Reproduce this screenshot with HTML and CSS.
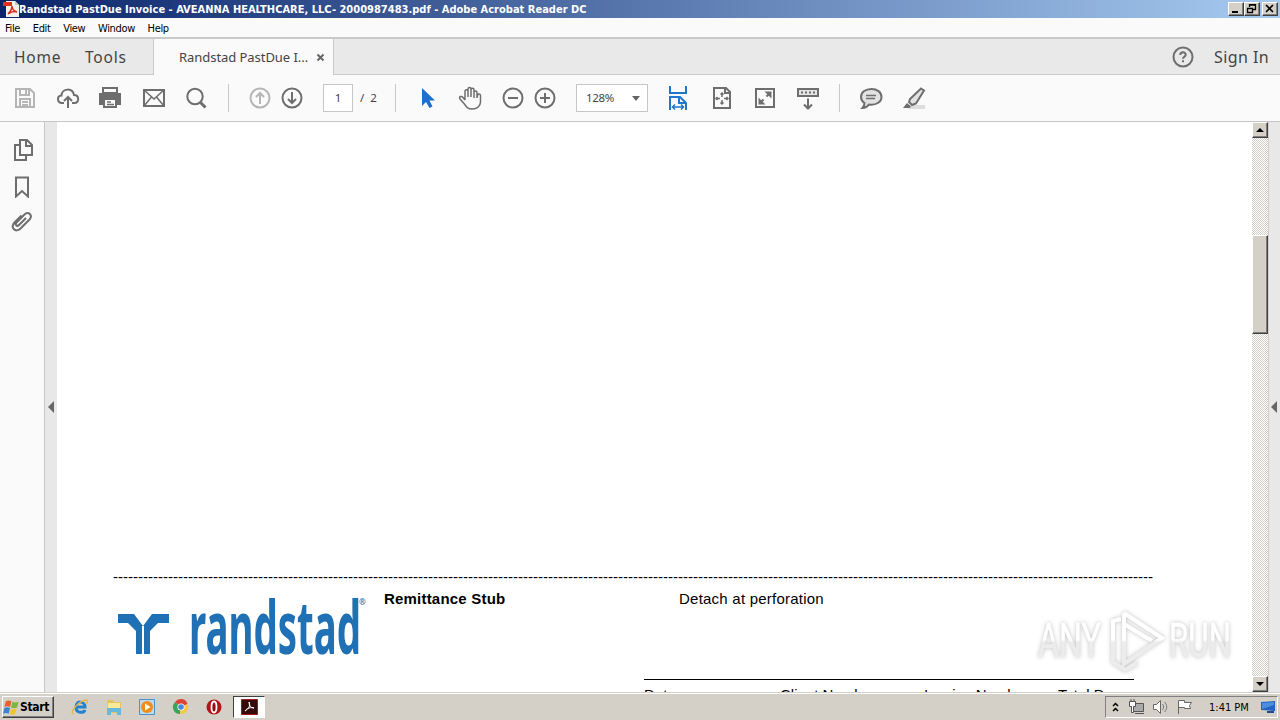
FILE: index.html
```html
<!DOCTYPE html>
<html lang="en">
<head>
  <meta charset="UTF-8">
  <title>Randstad PastDue Invoice - Adobe Acrobat Reader DC</title>
  <link rel="stylesheet" href="styles.css">
</head>
<body>
  <header class="titlebar">
    <svg class="app-icon" width="17" height="16" viewBox="0 0 17 16">
      <path d="M4 0h9l4 4v12H4z" fill="#f4f0ee"/>
      <path d="M13 0v4h4z" fill="#c8c8c8"/>
      <path d="M1 1h9v4H1z" fill="#e03020"/>
      <path d="M6 13c3-3 4-5 4-8 0 4 2 5 5 6-3-1-6 0-9 2z" fill="none" stroke="#d42a1c" stroke-width="1.5"/>
    </svg>
    <span class="window-title">Randstad PastDue Invoice - AVEANNA HEALTHCARE, LLC- 2000987483.pdf - Adobe Acrobat Reader DC</span>
    <div class="window-buttons">
      <button class="win-btn"><svg width="12" height="10"><path d="M3 8h6" stroke="#000" stroke-width="2"/></svg></button>
      <button class="win-btn"><svg width="12" height="10"><path d="M4.500 3V.5h6v5H8M4 1h7M2.500 4.500h5v4h-5zM2 4.500h6" fill="none" stroke="#000" stroke-width="1.300"/></svg></button>
      <button class="win-btn close"><svg width="12" height="10"><path d="M3 1l7 7M10 1L3 8" stroke="#000" stroke-width="1.600"/></svg></button>
    </div>
  </header>

  <nav class="menubar">
    <span>File</span><span>Edit</span><span>View</span><span>Window</span><span>Help</span>
  </nav>

  <div class="tabs">
    <div class="tab-links"><span class="home">Home</span><span>Tools</span></div>
    <div class="doc-tab">
      <span>Randstad PastDue I...</span>
      <svg width="9" height="9"><path d="M1.500 1.500l6 6M7.500 1.500l-6 6" stroke="#666" stroke-width="2"/></svg>
    </div>
    <div class="tab-right">
      <svg width="22" height="22" viewBox="0 0 22 22" fill="none" stroke="#6e6e6e" stroke-width="2">
        <circle cx="11" cy="11" r="9.500"/>
        <path d="M8.300 9c0-3.600 5.400-3.400 5.400-.3 0 2-2.700 2-2.700 4M11 14.300v2"/>
      </svg>
      <span class="sign-in">Sign In</span>
    </div>
  </div>

  <div class="toolbar">
    <!-- save -->
    <svg class="icon light" viewBox="0 0 24 24"><path d="M3 3h14l4 4v14H3zM7 3v6h9V3M13 4v4M7 21v-8h10v8M9 16h6M9 19h6"/></svg>
    <!-- cloud upload -->
    <svg class="icon" viewBox="0 0 24 24"><path d="M8 17H6c-5 0-5.500-7-.5-7.500C6 2 16.500 1.500 18 9c5.500 0 5.500 8 .5 8H16M12 22V11M8 15l4-4 4 4"/></svg>
    <!-- print -->
    <svg class="icon" viewBox="0 0 24 24"><path d="M5 2h14v5H5z"/><path class="solid" d="M1 7h22v12h-4v-5H5v5H1z"/><path d="M6 13h12v8H6z" fill="#fafafa"/><path class="thin" d="M9 16h4M9 18.500h7"/></svg>
    <!-- mail -->
    <svg class="icon" viewBox="0 0 24 24"><path d="M2 4h20v16H2z"/><path class="thin" d="M2 4l10 9 10-9M2 20l7.500-9M22 20l-7.500-9"/></svg>
    <!-- search -->
    <svg class="icon" viewBox="0 0 24 24"><circle cx="11" cy="10.500" r="7.700"/><path class="heavy" d="M16.500 16.500l5 5"/></svg>
    <i class="sep"></i>
    <!-- previous / next page -->
    <svg class="icon light" viewBox="0 0 24 24"><circle cx="12" cy="12" r="9.500"/><path d="M12 18V7M8 11l4-4 4 4"/></svg>
    <svg class="icon" viewBox="0 0 24 24"><circle cx="12" cy="12" r="9.500"/><path d="M12 6v11M8 13l4 4 4-4"/></svg>
    <div class="page-box">1</div>
    <span class="page-total">/&nbsp; 2</span>
    <i class="sep"></i>
    <!-- select arrow -->
    <svg class="icon" viewBox="0 0 24 24"><path fill="#1d6fd0" stroke="none" d="M7 2v18l4-4 3.500 6 3-1.500-3-6H20z"/></svg>
    <!-- hand -->
    <svg class="icon" viewBox="0 0 24 24"><path class="thin" d="M7 14V5.500C7 3 10 3 10 5.500V11 3c0-2 3-2 3 0v8-7c0-2.300 3-2.300 3 0v8-5.500c0-2 3-2 3 0V12c0-5 3.500-5 3.500-2v6c0 4-3.500 7-8 7-5 0-6-2-8.500-5.500L2 13c-1.500-2.500 1.500-3.500 3-1.500l2 2.500"/></svg>
    <svg class="icon" viewBox="0 0 24 24"><circle cx="12" cy="12" r="9.500"/><path d="M7 12h10"/></svg>
    <svg class="icon" viewBox="0 0 24 24"><circle cx="12" cy="12" r="9.500"/><path d="M7 12h10M12 7v10"/></svg>
    <div class="zoom-box"><span>128%</span><i class="caret"></i></div>
    <!-- fit width -->
    <svg class="icon blue" viewBox="0 0 24 24"><path d="M4 0v7h16V0M4 24V11h10l6 6v7M13 11v6h7"/><path class="thin" d="M6.500 21h11M9 18.500L6.500 21 9 23.500M15 18.500l2.500 2.500-2.500 2.500"/></svg>
    <!-- fit page -->
    <svg class="icon" viewBox="0 0 24 24"><path d="M4 2h12l4 4v16H4zM15 2v5h5"/><path class="thin" d="M12 7v4M12 14v4M6 12.500h4M14 12.500h4M10.500 8.500L12 7l1.500 1.500M10.500 16.500L12 18l1.500-1.500M7.500 11L6 12.500 7.500 14M16.500 11l1.500 1.500-1.500 1.500"/></svg>
    <!-- full screen -->
    <svg class="icon" viewBox="0 0 24 24"><path d="M3 3h18v18H3zM7 17l3.500-3.500M13.500 10.500L17 7"/><path class="solid" d="M11.500 5.500h7v7zM5.500 11.500v7h7z"/></svg>
    <!-- read mode -->
    <svg class="icon" viewBox="0 0 24 24"><path fill="#e4e4e4" d="M2 3h20v7H2z"/><path d="M5 6.500h14" stroke-dasharray="2 2"/><path d="M12 12.500v10M8 18.500l4 4 4-4"/></svg>
    <i class="sep"></i>
    <!-- comment -->
    <svg class="icon" viewBox="0 0 24 24"><path fill="#e2e2e2" d="M12.500 3C6 3 2 6.500 2 11c0 2.500 1.300 4.500 3.500 6 0 2-.5 3.500-2 5 3 0 5-1.500 6.500-3.500 7 1 12.500-2.500 12.500-7.500S18 3 12.500 3z"/><path class="thin" d="M7 9.500h10M7 12.500h9"/></svg>
    <!-- highlight -->
    <svg class="icon" viewBox="0 0 24 24"><path d="M9 19h14v4H6z" fill="#ddd" stroke="none"/><path fill="#e2e2e2" d="M19 2.500l3 2-8 13-4 1.500-3-3 1-3z"/><path class="solid" d="M5 17l4 3.500L7.500 22H1z"/></svg>
  </div>

  <main class="workspace">
    <aside class="side-panel">
      <svg class="icon" viewBox="0 0 24 24"><path d="M9 2h7l5 5v10H9zM15 2v6h6M9 7H4v15h11v-5"/></svg>
      <svg class="icon" viewBox="0 0 24 24"><path d="M5 3.500h12v19l-6-5.500-6 5.500z"/></svg>
      <svg class="icon clip" viewBox="0 0 24 24"><path d="M16 8l-7 7c-2 2-4.500-.5-2.500-2.500l8-8c4-4 8.500 1 5 5l-9 9c-5 5-10.500-1-6-6l7-7"/></svg>
    </aside>
    <div class="strip"><i class="arrow"></i></div>

    <section class="page">
      <div class="perforation">----------------------------------------------------------------------------------------------------------------------------------------------------------------------------------------------------------------</div>
      <div class="stub">
        <svg class="logo" width="256" height="70" viewBox="0 0 256 70">
          <g fill="#1f70b4">
            <path d="M5 24h16l9 12v28h-7V41l-8-8H5z"/>
            <path d="M56 24H39l-9 12v28h7V41l8-8h11z"/>
            <path d="M30 36v28" stroke="#fff" stroke-width="2"/>
            <text class="logo-text" x="76" y="64" textLength="172" lengthAdjust="spacingAndGlyphs">randstad</text>
            <text class="logo-mark" x="246" y="15">®</text>
          </g>
        </svg>
        <b class="stub-title">Remittance Stub</b>
        <span class="detach">Detach at perforation</span>
      </div>
      <div class="totals">
        <span>Date</span><span>Client Number</span><span>Invoice Number</span><span>Total Due</span>
      </div>
      <svg class="watermark" width="200" height="70" viewBox="0 0 200 70">
        <defs>
          <linearGradient id="fade" gradientUnits="userSpaceOnUse" x1="0" y1="8" x2="0" y2="62">
            <stop offset="0.48" stop-color="#fff"/>
            <stop offset="0.52" stop-color="#ececec"/>
          </linearGradient>
        </defs>
        <g class="mark" stroke="url(#fade)">
          <text x="2" y="51" textLength="63" lengthAdjust="spacingAndGlyphs" fill="url(#fade)">ANY</text>
          <text x="133" y="51" textLength="62" lengthAdjust="spacingAndGlyphs" fill="url(#fade)">RUN</text>
          <path d="M88 7l38 25-38 26V7"/>
          <path d="M88 18l28 17"/>
          <path d="M85 13l-8 2v41l12 8 12-7"/>
        </g>
      </svg>
    </section>

    <div class="scrollbar">
      <button class="scroll-btn"><i class="up"></i></button>
      <div class="thumb"></div>
      <button class="scroll-btn"><i class="down"></i></button>
    </div>
    <div class="strip right"><i class="arrow"></i></div>
  </main>

  <footer class="taskbar">
    <button class="start">
      <svg width="17" height="17" viewBox="0 0 18 17">
        <path d="M3 2c2-1.500 4-1 6 0L7.500 8c-2-1-4-1-6 0z" fill="#e8602c"/>
        <path d="M10 2.500c2 1 4 1 6.500 0L15 8.500c-2 1-4 1-6.500 0z" fill="#7cb83c"/>
        <path d="M1.500 9c2-1 4-1 6 0L6 15c-2-1-4-1-6 0z" fill="#3c84d0"/>
        <path d="M8.500 9.500c2 1 4 1 6 0L13 15.500c-2 1-4 1-6 0z" fill="#f4c430"/>
      </svg>
      <span>Start</span>
    </button>
    <div class="launch">
      <svg width="18" height="18" viewBox="0 0 18 18"><path d="M14 12c-1 3-9 4-9-3s9-6 9 0H6" fill="none" stroke="#2383cf" stroke-width="3"/><path d="M2 16C-1 13 8 3 15 2c3 0 1 3 0 4" fill="none" stroke="#e8b63c" stroke-width="1.300"/></svg>
      <svg width="18" height="18" viewBox="0 0 18 18"><path d="M2 2h6l1 2h7v11H2z" fill="#e6c45c"/><path d="M3 5h12v5H3z" fill="#fbe998"/><path d="M2 17v-7h14v7h-4v-3H6v3z" fill="#67b9dc"/></svg>
      <svg width="18" height="18" viewBox="0 0 18 18"><path d="M1.500 1.500h15v15h-15z" fill="#b7dcf4" stroke="#4c92ca"/><circle cx="9" cy="9" r="6" fill="#f28a1c"/><path d="M7 5.500L12.500 9 7 12.500z" fill="#fff"/></svg>
      <svg width="18" height="18" viewBox="0 0 18 18"><path d="M9 9L3 4a7 7 0 0 1 12.500 2z" fill="#dc4437"/><path d="M9 9L8 16A7 7 0 0 1 3 4z" fill="#3fa257"/><path d="M9 9l6.500-3A7 7 0 0 1 8 16z" fill="#f8c93c"/><circle cx="9" cy="9" r="3.600" fill="#fff"/><circle cx="9" cy="9" r="2.800" fill="#4688dc"/></svg>
      <svg width="18" height="18" viewBox="0 0 18 18"><circle cx="9" cy="9" r="7.500" fill="#b41418"/><ellipse cx="9" cy="9" rx="2.500" ry="5.500" fill="#8c0c10" stroke="#fff" stroke-width="1.800"/></svg>
    </div>
    <div class="task-active">
      <svg width="17" height="16" viewBox="0 0 17 16"><path d="M.5.5h16v15H.5z" fill="#37090a" stroke="#a01c1c"/><path d="M8 3c2 4-1 7-4 9 2-3 6-4 9-3-3 0-5-2-5-6z" fill="none" stroke="#fff"/></svg>
    </div>
    <div class="tray">
      <svg class="chevrons" width="7" height="11"><path d="M1 4l2.500-2.500L6 4M1 9l2.500-2.500L6 9" fill="none" stroke="#000" stroke-width="1.500"/></svg>
      <svg class="network" width="18" height="16"><path d="M5.500 4.500h10v8h-10zM7 14.500h9" fill="#aaa" stroke="#555"/><path d="M1.500 2.500h6v5h-2v6h-2v-6h-2zM3 0v3M6 0v3" fill="#fff" stroke="#555"/></svg>
      <svg class="volume" width="18" height="16"><path d="M1.500 5.500h3l4-4v13l-4-4h-3z" fill="#fff" stroke="#666"/><path d="M10.500 5c1.500 2 1.500 4 0 6M12.500 3c3 3 3 7 0 10" fill="none" stroke="#777"/></svg>
      <svg class="flag" width="18" height="16"><path d="M2.500 15V1.500h6v2h7l-2 3 1 3h-6v-1h-6" fill="#fff" stroke="#666"/></svg>
      <span class="clock">1:41 PM</span>
      <svg width="16" height="14"><path d="M1 2l14-1v10L1 10z" fill="#2464c0"/><path d="M2 3l12-1v3L2 9z" fill="#4d8de0"/><path d="M7 12h7" stroke="#24488c" stroke-width="2"/></svg>
    </div>
  </footer>
</body>
</html>
```

FILE: styles.css
```css
* {
  box-sizing: border-box;
}

body {
  margin: 0;
  width: 1280px;
  height: 720px;
  overflow: hidden;
  display: flex;
  flex-direction: column;
  background: #fafafa;
  color: #000;
  font-family: "DejaVu Sans Condensed", "DejaVu Sans", sans-serif;
  font-size: 11px;
}

button {
  padding: 0;
  font-family: inherit;
}

svg {
  display: block;
  flex: none;
}

/* title bar */
.titlebar {
  height: 18px;
  display: flex;
  align-items: center;
  padding: 0 2px;
  background: linear-gradient(to right, #0a246a, #a6caf0);
}

.window-title {
  color: #fff;
  font-size: 11px;
  font-weight: bold;
  letter-spacing: 0.01px;
  white-space: nowrap;
}

.window-buttons {
  margin-left: auto;
  display: flex;
}

.win-btn,
.scroll-btn,
.start {
  background: #d4d0c8;
  border: 1px solid;
  border-color: #fff #404040 #404040 #fff;
  box-shadow: inset -1px -1px #808080;
}

.win-btn {
  width: 16px;
  height: 14px;
}

.win-btn.close {
  margin-left: 2px;
}

/* menu */
.menubar {
  height: 19px;
  display: flex;
  align-items: center;
  gap: 12.7px;
  padding: 1px 0 0 5px;
  letter-spacing: -0.35px;
}

/* tabs */
.tabs {
  height: 38px;
  display: flex;
  border-top: 2px solid #c9c9c9;
  font-family: "Noto Sans", sans-serif;
  color: #444;
  white-space: nowrap;
}

.tab-links {
  width: 154px;
  display: flex;
  align-items: center;
  padding-left: 14px;
  background: #e9e9e9;
  border-right: 1px solid #c9c9c9;
  border-bottom: 1px solid #c9c9c9;
  font-size: 15.5px;
  letter-spacing: 0.8px;
}

.home {
  width: 71px;
}

.doc-tab {
  width: 179px;
  display: flex;
  align-items: center;
  justify-content: space-between;
  padding: 0 8px 0 25px;
  font-size: 13px;
  letter-spacing: -0.05px;
}

.tab-right {
  flex: 1;
  display: flex;
  align-items: center;
  justify-content: flex-end;
  gap: 20px;
  padding-right: 11px;
  background: #e9e9e9;
  border-left: 1px solid #c9c9c9;
  border-bottom: 1px solid #c9c9c9;
}

.sign-in {
  font-size: 16px;
  letter-spacing: 0.4px;
}

/* toolbar */
.toolbar {
  height: 47px;
  display: grid;
  grid-template-columns: 43px 42px 44px 42px 44px 20px 32px 43px 37px 35px 20px 43px 43px 32px 43px 90px 44px 43px 43px 43px 20px 43px 24px;
  align-items: center;
  padding-left: 13px;
  border-bottom: 1px solid #c6c6c6;
}

.icon {
  width: 24px;
  height: 24px;
  fill: none;
  stroke: #6e6e6e;
  stroke-width: 2;
}

.icon.light {
  stroke: #b5b5b5;
}

.icon.blue {
  stroke: #2176c7;
}

.thin {
  stroke-width: 1.5;
}

.heavy {
  stroke-width: 3;
}

.solid {
  fill: #6e6e6e;
  stroke: none;
}

.sep {
  width: 1px;
  height: 28px;
  background: #c8c8c8;
}

.page-box,
.zoom-box {
  height: 28px;
  display: flex;
  align-items: center;
  padding-bottom: 2px;
  background: #fff;
  border: 1px solid #c6c6c6;
  color: #444;
  font-family: "Noto Sans", sans-serif;
  font-size: 11.5px;
}

.page-box {
  width: 30px;
  justify-content: center;
}

.page-total {
  padding-bottom: 2px;
  color: #444;
  font-family: "Noto Sans", sans-serif;
  font-size: 11.5px;
}

.zoom-box {
  width: 72px;
  justify-content: space-between;
  padding: 0 7px 2px 9px;
  letter-spacing: -0.3px;
}

.caret {
  margin-top: 2px;
  border: 4px solid transparent;
  border-top: 5px solid #666;
  border-bottom: 0;
}

/* workspace */
.workspace {
  flex: 1;
  min-height: 0;
  display: flex;
}

.side-panel {
  width: 45px;
  display: flex;
  flex-direction: column;
  gap: 12px;
  padding: 16px 0 0 11px;
  border-right: 1px solid #c6c6c6;
}

.clip {
  margin-left: -1px;
}

.strip {
  width: 12px;
  display: flex;
  align-items: center;
  justify-content: center;
  background: #e8e8e8;
}

.strip.right {
  border-left: 1px solid #d0d0d0;
}

.arrow {
  margin-top: -1px;
  border: 6px solid transparent;
  border-right: 6px solid #666;
  border-left: 0;
}

.strip.right .arrow {
  margin-right: 1px;
}

.page {
  position: relative;
  width: 1195px;
  padding: 446px 0 0 56px;
  overflow: hidden;
  background: #fff;
  font-family: "Liberation Sans", Arial, sans-serif;
  font-size: 15px;
}

.perforation {
  width: 1040px;
  height: 17px;
  line-height: 17px;
  overflow: hidden;
  white-space: nowrap;
  letter-spacing: 0.005px;
}

.stub {
  height: 94px;
  display: grid;
  grid-template-columns: 271px 295px 1fr;
  align-items: start;
  padding-top: 5px;
  line-height: 17px;
}

.logo-text {
  font-family: "Noto Sans", sans-serif;
  font-size: 73px;
  font-weight: 700;
}

.logo-mark {
  font-family: "Noto Sans", sans-serif;
  font-size: 8px;
  font-weight: bold;
}

.stub-title {
  letter-spacing: 0.2px;
}

.detach {
  letter-spacing: 0.23px;
}

.totals {
  width: 490px;
  margin-left: 531px;
  display: grid;
  grid-template-columns: 136px 144px 134px 1fr;
  padding-top: 6px;
  border-top: 1px solid #000;
  white-space: nowrap;
  line-height: 17px;
}

.watermark {
  position: absolute;
  left: 979px;
  top: 484px;
  filter: drop-shadow(0 0 2px rgba(0, 0, 0, 0.25));
}

.mark {
  fill: none;
  stroke-width: 4;
}

.mark text {
  stroke-width: 0.4;
  font-family: Roboto, sans-serif;
  font-size: 48px;
}

/* scrollbar */
.scrollbar {
  width: 16px;
  display: flex;
  flex-direction: column;
  background: repeating-conic-gradient(#fff 0 25%, #d4d0c8 0 50%) 0 0 / 2px 2px;
}

.scroll-btn {
  width: 16px;
  height: 16px;
  display: flex;
  align-items: center;
  justify-content: center;
}

.scroll-btn:last-child {
  margin-top: auto;
}

.up,
.down {
  border: 4px solid transparent;
}

.up {
  border-top: 0;
  border-bottom-color: #000;
}

.down {
  border-bottom: 0;
  border-top-color: #000;
}

.thumb {
  height: 99px;
  margin-top: 97px;
  background: #d4d0c8;
  border: 1px solid;
  border-color: #fff #404040 #404040 #fff;
  box-shadow: inset -1px -1px #808080;
}

/* taskbar */
.taskbar {
  height: 28px;
  display: flex;
  align-items: center;
  padding: 1px 2px 0;
  background: #d4d0c8;
  border-top: 1px solid #d4d0c8;
  box-shadow: inset 0 1px #fff;
}

.start {
  width: 52px;
  height: 22px;
  display: flex;
  align-items: center;
  font-size: 12px;
  font-weight: bold;
  letter-spacing: -0.3px;
}

.launch {
  display: flex;
  gap: 15.5px;
  margin-left: 17px;
}

.task-active {
  width: 32px;
  height: 22px;
  display: flex;
  align-items: center;
  justify-content: center;
  margin-left: 10px;
  background: #fff;
  border: 1px solid;
  border-color: #404040 #fff #fff #404040;
}

.tray {
  width: 173px;
  height: 22px;
  display: flex;
  align-items: center;
  margin-left: auto;
  padding-left: 6px;
  border: 1px solid;
  border-color: #808080 #fff #fff #808080;
}

.network {
  margin-left: 9px;
}

.volume,
.flag {
  margin-left: 6px;
}

.clock {
  width: 51px;
  margin-left: 15px;
  white-space: nowrap;
}
```
